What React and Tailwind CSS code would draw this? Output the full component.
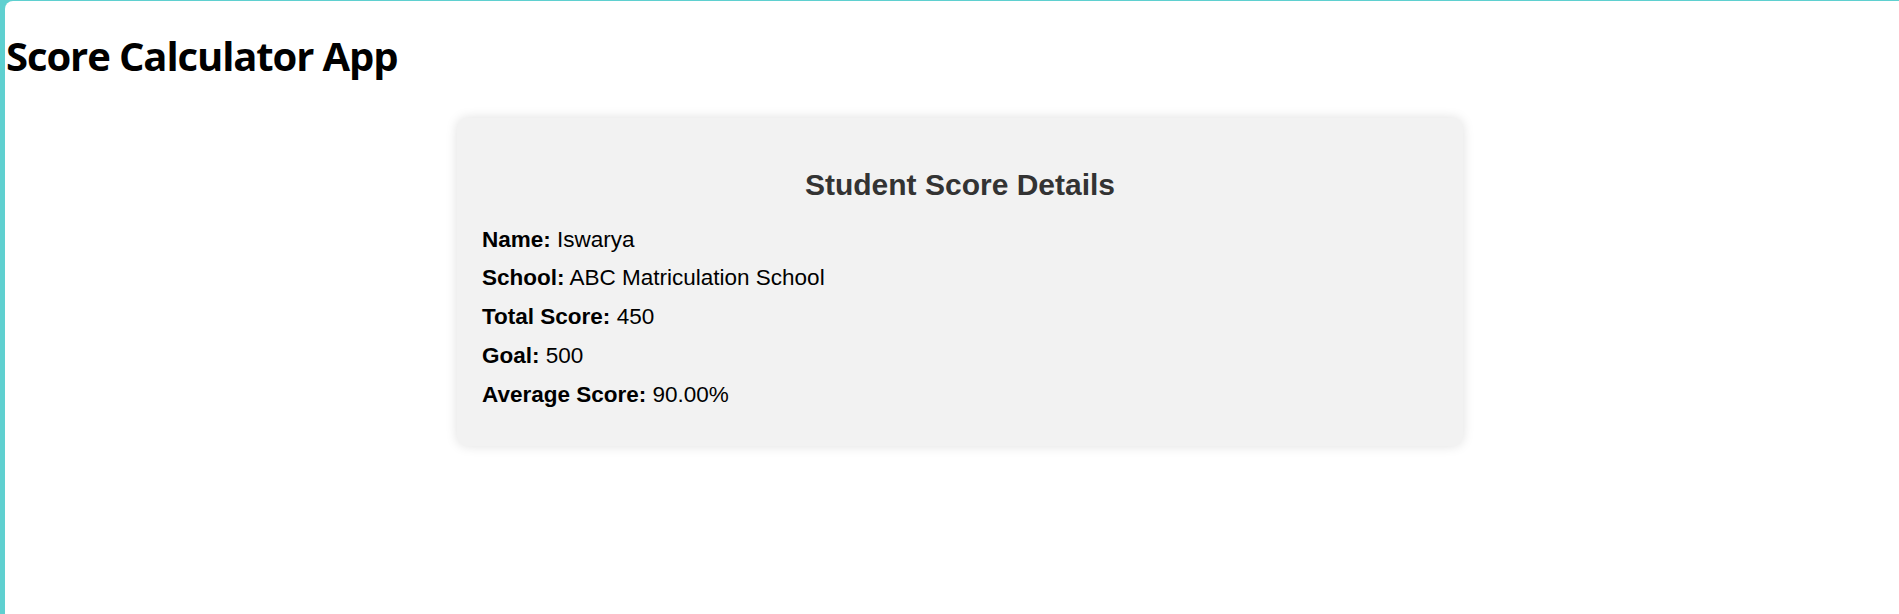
export default function App() {
  const rows = [
    ["Name:", "Iswarya"],
    ["School:", "ABC Matriculation School"],
    ["Total Score:", "450"],
    ["Goal:", "500"],
    ["Average Score:", "90.00%"],
  ];
  return (
    <div className="min-h-[614px] bg-[#5fd0d0] pt-px pl-[5px]">
      <div className="min-h-[613px] bg-white rounded-tl-[8px] pt-[28px] pb-[20px]">
        <h1
          className="mb-[36px] pl-[1px] text-[40px] leading-[53px] font-bold text-black tracking-[-1.1px]"
          style={{ fontFamily: '"Open Sans", "Noto Sans", sans-serif' }}
        >
          Score Calculator App
        </h1>
        <div className="flex justify-center pl-[16px]">
          <div
            className="w-[1006px] rounded-[10px] bg-[#f2f2f2] shadow-[0_0_12px_rgba(0,0,0,0.13)] px-[25px] pt-[50px] pb-[25px]"
            style={{ fontFamily: '"Liberation Sans", Arial, sans-serif' }}
          >
            <h2 className="text-[30px] leading-[34.5px] font-bold text-[#333] text-center mb-[24px]">
              Student Score Details
            </h2>
            <div className="flex flex-col gap-[12.9px] pb-[13px]">
              {rows.map(([k, v]) => (
                <p key={k} className="text-[22.5px] leading-[25.9px] text-black">
                  <span className="font-bold">{k}</span> {v}
                </p>
              ))}
            </div>
          </div>
        </div>
      </div>
    </div>
  );
}
